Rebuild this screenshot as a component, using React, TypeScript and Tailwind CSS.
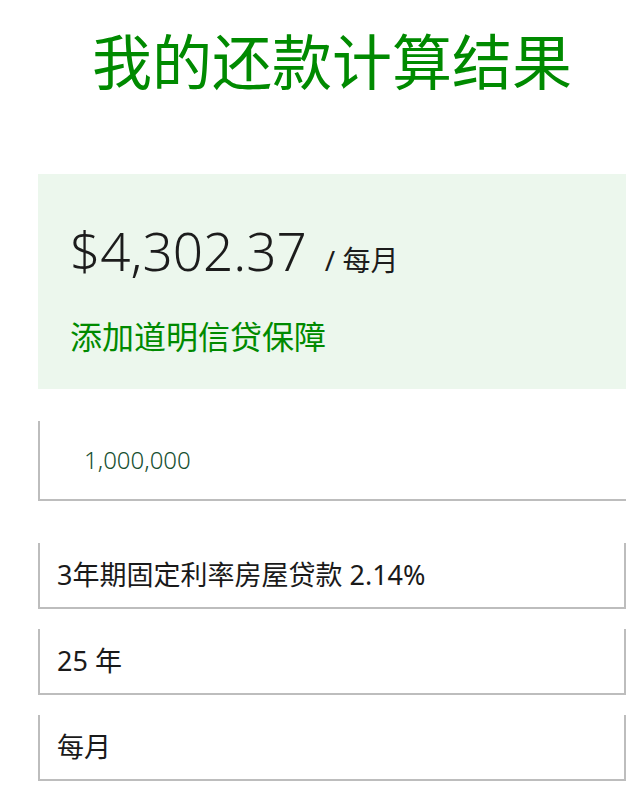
export default function App() {
  const selects = ["3年期固定利率房屋贷款 2.14%", "25 年", "每月"]

  return (
    <div
      className="min-h-screen bg-white"
      style={{ fontFamily: '"Noto Sans", "Noto Sans CJK SC", sans-serif' }}
    >
      <div className="ml-[38px] w-[588px] pt-[32px]">
        <h1 className="text-center text-[60px] leading-none font-normal text-[#008a00]">
          我的还款计算结果
        </h1>

        <div className="mt-[82px] bg-[#ecf7ed] px-8 pt-[50px] pb-[36px]">
          <div className="flex items-baseline">
            <span className="text-[53px] leading-none font-light text-[#1c1c1c]">
              $4,302.37
            </span>
            <span className="ml-[18px] text-[28px] leading-none text-[#1c1c1c]">
              / 每月
            </span>
          </div>
          <div className="mt-[44px] text-[32px] leading-none text-[#008a00]">
            添加道明信贷保障
          </div>
        </div>

        <div className="mt-[32px] flex h-[80px] items-center border-b-2 border-l-2 border-[#bdbdbd] pl-[44px]">
          <span className="text-[24px] font-light text-[#174f31]">1,000,000</span>
        </div>

        <div className="mt-[42px] flex flex-col gap-[20px]">
          {selects.map((s) => (
            <div
              key={s}
              className="flex h-[66px] items-center border-x-2 border-b-2 border-[#bdbdbd] pl-[17px]"
            >
              <span className="text-[27px] text-[#1a1a1a]">{s}</span>
            </div>
          ))}
        </div>
      </div>
    </div>
  )
}
